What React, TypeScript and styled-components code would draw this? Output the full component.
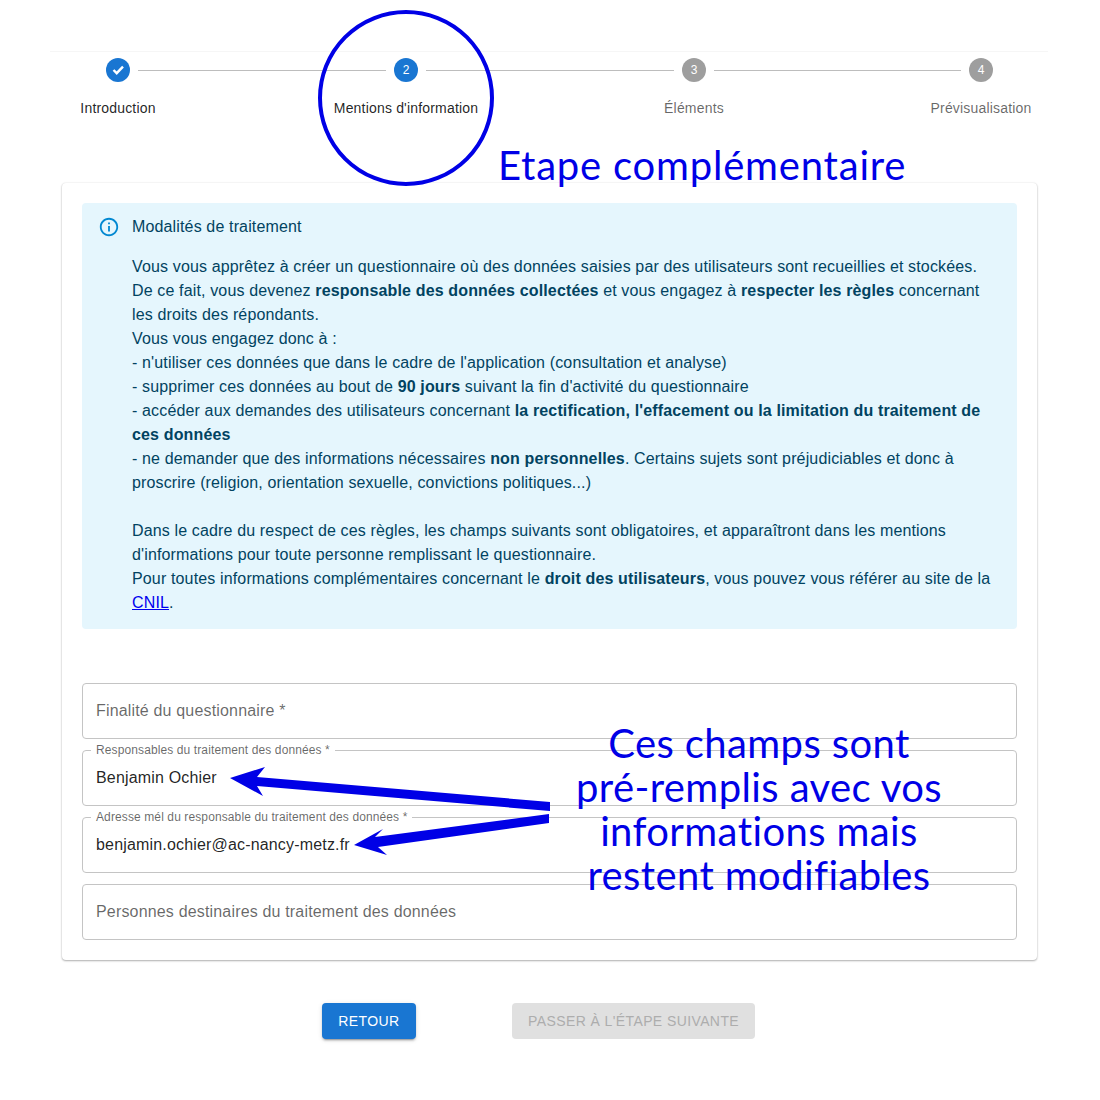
import React from 'react'
import styled, {createGlobalStyle} from 'styled-components'

const GlobalStyle = createGlobalStyle`
  html, body {
    margin: 0;
    padding: 0;
    background: #fff;
  }
  body {
    font-family: "Liberation Sans", Arial, sans-serif;
    color: rgba(0, 0, 0, 0.87);
  }
`

const Page = styled.div`
  position: relative;
  width: 1100px;
  height: 1100px;
  padding-top: 51px;
  box-sizing: border-box;
  overflow: hidden;
`

const Stepper = styled.div`
  display: grid;
  grid-template-columns: 24px 248px 24px 248px 24px 247px 24px;
  column-gap: 8px;
  row-gap: 16px;
  align-items: center;
  margin: 0 52px 0 50px;
  padding: 6px 0 0 56px;
  border-top: 1px solid #f6f6f6;
`

const StepCircle = styled.div<{$active?: boolean}>`
  display: flex;
  align-items: center;
  justify-content: center;
  width: 24px;
  height: 24px;
  border-radius: 50%;
  background: ${(props) => (props.$active ? '#1976d2' : '#9e9e9e')};
  color: #fff;
  font-size: 12px;
  line-height: 1;
`

const Connector = styled.div`
  height: 1px;
  background: #bdbdbd;
`

const StepLabel = styled.div<{$active?: boolean; $column: number}>`
  grid-row: 2;
  grid-column: ${(props) => props.$column};
  justify-self: center;
  white-space: nowrap;
  font-size: 14px;
  letter-spacing: 0.18px;
  line-height: 20px;
  color: ${(props) => (props.$active ? 'rgba(0, 0, 0, 0.87)' : 'rgba(0, 0, 0, 0.6)')};
`

const Card = styled.div`
  display: flex;
  flex-direction: column;
  width: 975px;
  box-sizing: border-box;
  margin: 65px 0 0 62px;
  padding: 20px;
  background: #fff;
  border-radius: 4px;
  box-shadow: 0 1px 2px rgba(0, 0, 0, 0.3), 0 0 2px rgba(0, 0, 0, 0.1);
`

const Alert = styled.div`
  display: flex;
  gap: 12px;
  padding: 12px 16px 14px 16px;
  background: #e5f6fd;
  border-radius: 4px;
  color: #014361;
  font-size: 16px;
  letter-spacing: 0.145px;
  line-height: 24px;
`

const AlertIcon = styled.svg`
  flex: none;
  width: 22px;
  height: 22px;
  margin-top: 1px;
  fill: #0288d1;
`

const AlertTitle = styled.div`
  margin-bottom: 16px;
`

const AlertLink = styled.a`
  color: #0000ee;
  text-decoration: underline;
`

const Fields = styled.div`
  display: flex;
  flex-direction: column;
  gap: 11px;
  margin-top: 54px;
`

const Field = styled.div`
  position: relative;
  display: flex;
  align-items: center;
  height: 56px;
  box-sizing: border-box;
  padding: 0 13px;
  border: 1px solid #c4c4c4;
  border-radius: 4px;
  font-size: 16px;
  letter-spacing: 0.17px;
`

const FieldPlaceholder = styled.span`
  color: rgba(0, 0, 0, 0.6);
`

const FieldLabel = styled.span`
  position: absolute;
  top: -8px;
  left: 8px;
  padding: 0 5px;
  background: #fff;
  font-size: 12px;
  letter-spacing: 0.11px;
  line-height: 14px;
  color: rgba(0, 0, 0, 0.6);
`

const Actions = styled.div`
  display: flex;
  align-items: center;
  gap: 96px;
  margin-top: 43px;
  padding-left: 322px;
`

const Button = styled.button`
  min-width: 94px;
  height: 36px;
  padding: 0 16px;
  border: none;
  border-radius: 4px;
  font-family: inherit;
  font-size: 14px;
  letter-spacing: 0.4px;
  text-transform: uppercase;
  background: #1976d2;
  color: #fff;
  box-shadow: 0 3px 1px -2px rgba(0, 0, 0, 0.2), 0 2px 2px rgba(0, 0, 0, 0.14), 0 1px 5px rgba(0, 0, 0, 0.12);

  &:disabled {
    background: #e0e0e0;
    color: #adadad;
    box-shadow: none;
  }
`

const Drawing = styled.svg`
  position: absolute;
  top: 0;
  left: 0;
  width: 1100px;
  height: 1100px;
  pointer-events: none;
`

const Note = styled.div`
  position: absolute;
  color: #0000e6;
  font-family: Lato, "Open Sans", sans-serif;
  font-size: 40px;
  font-variant-ligatures: none;
  line-height: 44px;
`

const StepNote = styled(Note)`
  top: 143px;
  left: 498px;
  letter-spacing: 0.8px;
  white-space: nowrap;
`

const FieldsNote = styled(Note)`
  top: 721px;
  left: 559px;
  width: 400px;
  letter-spacing: 0.4px;
  text-align: center;
`

const steps = ['Introduction', "Mentions d'information", 'Éléments', 'Prévisualisation']

function App() {
  return (
    <Page>
      <GlobalStyle />
      <Stepper>
        <StepCircle $active>
          <svg width="24" height="24" viewBox="0 0 24 24">
            <polyline points="7.5,12 10.7,15.2 17,8.7" fill="none" stroke="#fff" strokeWidth="2.4" />
          </svg>
        </StepCircle>
        <Connector />
        <StepCircle $active>2</StepCircle>
        <Connector />
        <StepCircle>3</StepCircle>
        <Connector />
        <StepCircle>4</StepCircle>
        {steps.map((step, index) => (
          <StepLabel key={step} $column={index * 2 + 1} $active={index < 2}>
            {step}
          </StepLabel>
        ))}
      </Stepper>

      <Card>
        <Alert>
          <AlertIcon viewBox="0 0 24 24">
            <path d="M11 7h2v2h-2zm0 4h2v6h-2zm1-9C6.48 2 2 6.48 2 12s4.48 10 10 10 10-4.48 10-10S17.52 2 12 2zm0 18c-4.41 0-8-3.59-8-8s3.59-8 8-8 8 3.59 8 8-3.59 8-8 8z" />
          </AlertIcon>
          <div>
            <AlertTitle>Modalités de traitement</AlertTitle>
            Vous vous apprêtez à créer un questionnaire où des données saisies par des utilisateurs sont recueillies et stockées.
            <br />
            De ce fait, vous devenez <b>responsable des données collectées</b> et vous engagez à <b>respecter les règles</b> concernant les droits des répondants.
            <br />
            Vous vous engagez donc à :
            <br />
            - n'utiliser ces données que dans le cadre de l'application (consultation et analyse)
            <br />
            - supprimer ces données au bout de <b>90 jours</b> suivant la fin d'activité du questionnaire
            <br />
            - accéder aux demandes des utilisateurs concernant <b>la rectification, l'effacement ou la limitation du traitement de ces données</b>
            <br />
            - ne demander que des informations nécessaires <b>non personnelles</b>. Certains sujets sont préjudiciables et donc à proscrire (religion, orientation sexuelle, convictions politiques...)
            <br />
            <br />
            Dans le cadre du respect de ces règles, les champs suivants sont obligatoires, et apparaîtront dans les mentions d'informations pour toute personne remplissant le questionnaire.
            <br />
            Pour toutes informations complémentaires concernant le <b>droit des utilisateurs</b>, vous pouvez vous référer au site de la <AlertLink href="#">CNIL</AlertLink>.
          </div>
        </Alert>

        <Fields>
          <Field>
            <FieldPlaceholder>Finalité du questionnaire *</FieldPlaceholder>
          </Field>
          <Field>
            <FieldLabel>Responsables du traitement des données *</FieldLabel>
            Benjamin Ochier
          </Field>
          <Field>
            <FieldLabel>Adresse mél du responsable du traitement des données *</FieldLabel>
            benjamin.ochier@ac-nancy-metz.fr
          </Field>
          <Field>
            <FieldPlaceholder>Personnes destinaires du traitement des données</FieldPlaceholder>
          </Field>
        </Fields>
      </Card>

      <Actions>
        <Button>Retour</Button>
        <Button disabled>Passer à l'étape suivante</Button>
      </Actions>

      <Drawing viewBox="0 0 1100 1100">
        <circle cx="406" cy="98" r="86" fill="none" stroke="#0000e6" strokeWidth="4" />
        <polygon points="550,802 550,811 257,786 263,796 230,778 265,767 257,777" fill="#0000e6" />
        <polygon points="549,814 549,823 378,847 387,855 354,845 383,829 375,837" fill="#0000e6" />
      </Drawing>
      <StepNote>Etape complémentaire</StepNote>
      <FieldsNote>
        Ces champs sont
        <br />
        pré-remplis avec vos
        <br />
        informations mais
        <br />
        restent modifiables
      </FieldsNote>
    </Page>
  )
}

export default App
